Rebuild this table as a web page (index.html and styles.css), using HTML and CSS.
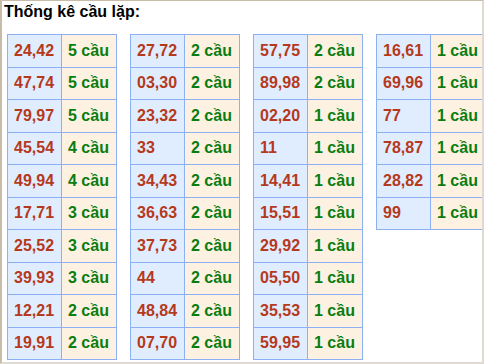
FILE: index.html
```html
<!DOCTYPE html>
<html>
<head>
<meta charset="utf-8">
<link rel="stylesheet" href="styles.css">
</head>
<body>
<div class="frame">
  <div class="title">Thống kê cầu lặp:</div>
  <div class="tables">
    <table class="stat">
      <tr><td class="num">24,42</td><td class="cnt">5 cầu</td></tr>
      <tr><td class="num">47,74</td><td class="cnt">5 cầu</td></tr>
      <tr><td class="num">79,97</td><td class="cnt">5 cầu</td></tr>
      <tr><td class="num">45,54</td><td class="cnt">4 cầu</td></tr>
      <tr><td class="num">49,94</td><td class="cnt">4 cầu</td></tr>
      <tr><td class="num">17,71</td><td class="cnt">3 cầu</td></tr>
      <tr><td class="num">25,52</td><td class="cnt">3 cầu</td></tr>
      <tr><td class="num">39,93</td><td class="cnt">3 cầu</td></tr>
      <tr><td class="num">12,21</td><td class="cnt">2 cầu</td></tr>
      <tr><td class="num">19,91</td><td class="cnt">2 cầu</td></tr>
    </table>
    <table class="stat">
      <tr><td class="num">27,72</td><td class="cnt">2 cầu</td></tr>
      <tr><td class="num">03,30</td><td class="cnt">2 cầu</td></tr>
      <tr><td class="num">23,32</td><td class="cnt">2 cầu</td></tr>
      <tr><td class="num">33</td><td class="cnt">2 cầu</td></tr>
      <tr><td class="num">34,43</td><td class="cnt">2 cầu</td></tr>
      <tr><td class="num">36,63</td><td class="cnt">2 cầu</td></tr>
      <tr><td class="num">37,73</td><td class="cnt">2 cầu</td></tr>
      <tr><td class="num">44</td><td class="cnt">2 cầu</td></tr>
      <tr><td class="num">48,84</td><td class="cnt">2 cầu</td></tr>
      <tr><td class="num">07,70</td><td class="cnt">2 cầu</td></tr>
    </table>
    <table class="stat">
      <tr><td class="num">57,75</td><td class="cnt">2 cầu</td></tr>
      <tr><td class="num">89,98</td><td class="cnt">2 cầu</td></tr>
      <tr><td class="num">02,20</td><td class="cnt">1 cầu</td></tr>
      <tr><td class="num">11</td><td class="cnt">1 cầu</td></tr>
      <tr><td class="num">14,41</td><td class="cnt">1 cầu</td></tr>
      <tr><td class="num">15,51</td><td class="cnt">1 cầu</td></tr>
      <tr><td class="num">29,92</td><td class="cnt">1 cầu</td></tr>
      <tr><td class="num">05,50</td><td class="cnt">1 cầu</td></tr>
      <tr><td class="num">35,53</td><td class="cnt">1 cầu</td></tr>
      <tr><td class="num">59,95</td><td class="cnt">1 cầu</td></tr>
    </table>
    <table class="stat">
      <tr><td class="num">16,61</td><td class="cnt">1 cầu</td></tr>
      <tr><td class="num">69,96</td><td class="cnt">1 cầu</td></tr>
      <tr><td class="num">77</td><td class="cnt">1 cầu</td></tr>
      <tr><td class="num">78,87</td><td class="cnt">1 cầu</td></tr>
      <tr><td class="num">28,82</td><td class="cnt">1 cầu</td></tr>
      <tr><td class="num">99</td><td class="cnt">1 cầu</td></tr>
    </table>
  </div>
</div>
</body>
</html>
```
FILE: styles.css
```css
html, body {
  margin: 0;
  padding: 0;
  background: #ffffff;
}
.frame {
  box-sizing: border-box;
  width: 484px;
  height: 364px;
  overflow: hidden;
  border-left: 2px solid #c8bca8;
  border-top: 1px solid #c8bca8;
  border-right: 2px solid #dedad2;
  border-bottom: 2px solid #dedad2;
  font-family: "Liberation Sans", Arial, sans-serif;
  font-weight: bold;
  font-size: 16px;
}
.title {
  padding: 2px 0 0 2px;
  line-height: 18px;
  color: #000;
}
.tables {
  display: flex;
  align-items: flex-start;
  gap: 13px;
  padding-left: 5px;
  margin-top: 13px;
}
.stat {
  flex: none;
  border-collapse: collapse;
  width: 110px;
  table-layout: fixed;
}
.stat td {
  border: 1px solid #8cb0f2;
  height: 31.5px;
  padding: 0 0 0 6px;
  text-align: left;
  vertical-align: middle;
  line-height: 18px;
  white-space: nowrap;
}
.num {
  width: 47px;
  background: #e0edff;
  color: #b5391c;
}
.cnt {
  width: 48px;
  background: #fdf2e2;
  color: #0a7d12;
}
```
